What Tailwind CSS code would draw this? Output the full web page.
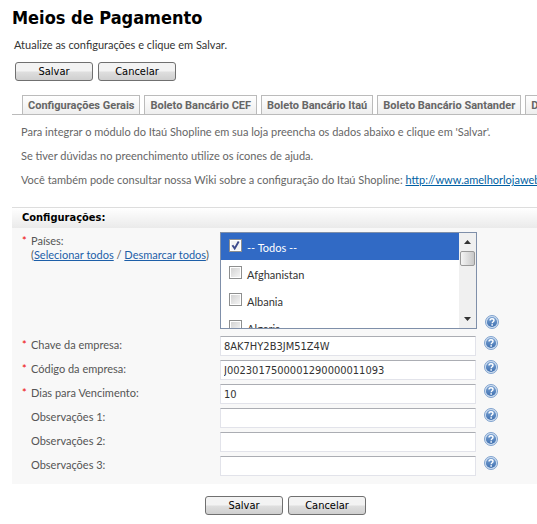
<!DOCTYPE html>
<html lang="pt-BR">
<head>
  <meta charset="UTF-8" />
  <meta name="viewport" content="width=device-width, initial-scale=1.0">
  <title>Meios de Pagamento</title>
  <script src="https://cdn.jsdelivr.net/npm/@tailwindcss/browser@4"></script>
</head>
<body class="bg-white pl-3 font-['Tahoma','Lato',sans-serif] text-[11px] leading-[14px] text-[#555]">

<!-- Help icon -->
<svg class="absolute size-0">
  <defs>
    <linearGradient id="helpFill" x1="0" y1="0" x2="0" y2="1">
      <stop offset="0" stop-color="#7ba3d3" />
      <stop offset="1" stop-color="#3f70b0" />
    </linearGradient>
    <symbol id="help" viewBox="0 0 14 14">
      <circle cx="7" cy="7" r="6.5" fill="#d3e1f2" stroke="#7399c8" stroke-width=".9" />
      <circle cx="7" cy="7" r="5.1" fill="url(#helpFill)" />
      <path d="M5 5.6C5 4.3 5.9 3.7 7 3.7s2 .7 2 1.7c0 1.3-1.8 1.4-1.8 2.8" fill="none" stroke="#fff" stroke-width="1.4" />
      <rect x="6.4" y="9.2" width="1.5" height="1.5" fill="#fff" />
    </symbol>
  </defs>
</svg>

<h1 class="pt-1.5 font-['Tahoma','DejaVu_Sans_Condensed',sans-serif] text-[18px] leading-6 font-bold text-black">Meios de Pagamento</h1>
<p class="mt-2 pl-0.5 text-[#333]">Atualize as configurações e clique em Salvar.</p>

<div class="flex gap-[5px] mt-[10px] pl-[3px] font-['Tahoma','DejaVu_Sans_Condensed',sans-serif]">
  <button type="submit" form="configForm" class="flex items-center justify-center w-[78px] h-[19px] pt-px border border-[#707070] rounded-[3px] bg-linear-to-b from-[#f3f3f3] from-45% via-[#dedede] via-55% to-[#cfcfcf] text-black">Salvar</button>
  <button type="button" class="flex items-center justify-center w-[78px] h-[19px] pt-px border border-[#707070] rounded-[3px] bg-linear-to-b from-[#f3f3f3] from-45% via-[#dedede] via-55% to-[#cfcfcf] text-black">Cancelar</button>
</div>

<!-- Tabs -->
<nav class="flex gap-1 mt-[14px] pl-[10px] border-b border-[#bbb] overflow-hidden whitespace-nowrap font-['Tahoma','Roboto',sans-serif] font-bold text-[#666]">
  <a href="#" class="h-[19px] px-[5px] pt-[3px] border border-b-0 border-[#bbb] bg-linear-to-b from-white to-[#eee]">Configurações Gerais</a>
  <a href="#" class="h-[19px] px-[5px] pt-[3px] border border-b-0 border-[#bbb] bg-linear-to-b from-white to-[#eee]">Boleto Bancário CEF</a>
  <a href="#" class="h-[19px] px-[5px] pt-[3px] border border-b-0 border-[#bbb] bg-linear-to-b from-white to-[#eee]">Boleto Bancário Itaú</a>
  <a href="#" class="h-[19px] px-[5px] pt-[3px] border border-b-0 border-[#bbb] bg-linear-to-b from-white to-[#eee]">Boleto Bancário Santander</a>
  <a href="#" class="h-[19px] px-[5px] pt-[3px] border border-b-0 border-[#bbb] bg-linear-to-b from-white to-[#eee]">Depósito</a>
</nav>

<div class="flex flex-col gap-[10px] mt-[10px] pl-[9px] overflow-hidden whitespace-nowrap text-[#666]">
  <p>Para integrar o módulo do Itaú Shopline em sua loja preencha os dados abaixo e clique em 'Salvar'.</p>
  <p>Se tiver dúvidas no preenchimento utilize os ícones de ajuda.</p>
  <p>Você também pode consultar nossa Wiki sobre a configuração do Itaú Shopline: <a href="#" class="text-[#005fa3] underline">http://www.amelhorlojaweb</a></p>
</div>

<form id="configForm" class="mt-5">
  <h2 class="h-[21px] pl-[10px] pt-[3px] border-t border-[#ddd] bg-linear-to-b from-white to-[#eaeaea] font-['Tahoma','DejaVu_Sans_Condensed',sans-serif] font-bold text-black">Configurações:</h2>

  <div class="flex flex-col gap-1 pt-1 pb-2 bg-[#f8f8f8]">
    <div class="flex items-start mb-[3px]">
      <div class="flex w-[208px] shrink-0 pl-[10px] pt-0.5">
        <span class="w-[9px] text-[#e00]">*</span>
        <div class="whitespace-nowrap">Países:<br>(<a href="#" class="text-[#1d5fa8] underline">Selecionar todos</a> / <a href="#" class="text-[#1d5fa8] underline">Desmarcar todos</a>)</div>
      </div>
      <div class="flex w-[257px] h-[97px] shrink-0 border border-[#7f8fa9] bg-white overflow-hidden">
        <div class="flex-1 text-[#333]">
          <label class="flex h-[27px] items-center pl-2 pt-0.5 gap-[5px] bg-[#316ac5] text-white">
            <span class="relative -mt-1 size-[13px]">
              <input type="checkbox" checked class="peer block appearance-none size-[13px] border border-[#8e8f8f] bg-[#f4f4f4] ring-1 ring-inset ring-white">
              <svg class="absolute inset-0 hidden peer-checked:block pointer-events-none" viewBox="0 0 13 13"><path d="M3.4 6.2l2.3 3.2 4-6.8" fill="none" stroke="#3c4a8c" stroke-width="1.9" /></svg>
            </span>
            -- Todos --
          </label>
          <label class="flex h-[27px] items-center pl-2 pt-0.5 gap-[5px]">
            <input type="checkbox" class="-mt-1 appearance-none size-[13px] border border-[#8e8f8f] bg-linear-to-br from-[#cfcfcf] to-[#f8f8f8] ring-1 ring-inset ring-white">
            Afghanistan
          </label>
          <label class="flex h-[27px] items-center pl-2 pt-0.5 gap-[5px]">
            <input type="checkbox" class="-mt-1 appearance-none size-[13px] border border-[#8e8f8f] bg-linear-to-br from-[#cfcfcf] to-[#f8f8f8] ring-1 ring-inset ring-white">
            Albania
          </label>
          <label class="flex h-[27px] items-center pl-2 pt-0.5 gap-[5px]">
            <input type="checkbox" class="-mt-1 appearance-none size-[13px] border border-[#8e8f8f] bg-linear-to-br from-[#cfcfcf] to-[#f8f8f8] ring-1 ring-inset ring-white">
            Algeria
          </label>
        </div>
        <!-- Scrollbar -->
        <div class="flex flex-col w-[17px] items-center bg-[#f0f0f0]">
          <svg class="w-[7px] h-[18px]" viewBox="0 0 7 18"><path d="M0 11l3.5-4L7 11z" fill="#333" /></svg>
          <div class="w-[15px] h-[15px] border border-[#999] rounded-[2px] bg-linear-to-r from-[#f5f5f5] to-[#c8c8c8]"></div>
          <svg class="w-[7px] h-[18px] mt-auto" viewBox="0 0 7 18"><path d="M0 7l3.5 4L7 7z" fill="#333" /></svg>
        </div>
      </div>
      <svg class="size-[14px] ml-2 self-end"><use href="#help" /></svg>
    </div>

    <div class="flex">
      <label for="chave" class="flex w-[208px] shrink-0 pl-[10px] pt-0.5"><span class="w-[9px] text-[#e00]">*</span>Chave da empresa:</label>
      <input type="text" id="chave" value="8AK7HY2B3JM51Z4W" class="w-[256px] h-5 px-[3px] border border-[#e2e3ea] border-t-[#abadb3] bg-white font-['Tahoma','DejaVu_Sans_Condensed',sans-serif] text-[#333]">
      <svg class="size-[14px] ml-2"><use href="#help" /></svg>
    </div>
    <div class="flex">
      <label for="codigo" class="flex w-[208px] shrink-0 pl-[10px] pt-0.5"><span class="w-[9px] text-[#e00]">*</span>Código da empresa:</label>
      <input type="text" id="codigo" value="J0023017500001290000011093" class="w-[256px] h-5 px-[3px] border border-[#e2e3ea] border-t-[#abadb3] bg-white font-['Tahoma','DejaVu_Sans_Condensed',sans-serif] text-[#333]">
      <svg class="size-[14px] ml-2"><use href="#help" /></svg>
    </div>
    <div class="flex">
      <label for="dias" class="flex w-[208px] shrink-0 pl-[10px] pt-0.5"><span class="w-[9px] text-[#e00]">*</span>Dias para Vencimento:</label>
      <input type="text" id="dias" value="10" class="w-[256px] h-5 px-[3px] border border-[#e2e3ea] border-t-[#abadb3] bg-white font-['Tahoma','DejaVu_Sans_Condensed',sans-serif] text-[#333]">
      <svg class="size-[14px] ml-2"><use href="#help" /></svg>
    </div>
    <div class="flex">
      <label for="obs1" class="w-[208px] shrink-0 pl-[19px] pt-0.5">Observações 1:</label>
      <input type="text" id="obs1" class="w-[256px] h-5 px-[3px] border border-[#e2e3ea] border-t-[#abadb3] bg-white font-['Tahoma','DejaVu_Sans_Condensed',sans-serif] text-[#333]">
      <svg class="size-[14px] ml-2"><use href="#help" /></svg>
    </div>
    <div class="flex">
      <label for="obs2" class="w-[208px] shrink-0 pl-[19px] pt-0.5">Observações 2:</label>
      <input type="text" id="obs2" class="w-[256px] h-5 px-[3px] border border-[#e2e3ea] border-t-[#abadb3] bg-white font-['Tahoma','DejaVu_Sans_Condensed',sans-serif] text-[#333]">
      <svg class="size-[14px] ml-2"><use href="#help" /></svg>
    </div>
    <div class="flex">
      <label for="obs3" class="w-[208px] shrink-0 pl-[19px] pt-0.5">Observações 3:</label>
      <input type="text" id="obs3" class="w-[256px] h-5 px-[3px] border border-[#e2e3ea] border-t-[#abadb3] bg-white font-['Tahoma','DejaVu_Sans_Condensed',sans-serif] text-[#333]">
      <svg class="size-[14px] ml-2"><use href="#help" /></svg>
    </div>
  </div>

  <div class="flex gap-[5px] mt-3 pl-[193px] font-['Tahoma','DejaVu_Sans_Condensed',sans-serif]">
    <button type="submit" class="flex items-center justify-center w-[78px] h-[19px] pt-px border border-[#707070] rounded-[3px] bg-linear-to-b from-[#f3f3f3] from-45% via-[#dedede] via-55% to-[#cfcfcf] text-black">Salvar</button>
    <button type="button" class="flex items-center justify-center w-[78px] h-[19px] pt-px border border-[#707070] rounded-[3px] bg-linear-to-b from-[#f3f3f3] from-45% via-[#dedede] via-55% to-[#cfcfcf] text-black">Cancelar</button>
  </div>
</form>

</body>
</html>
